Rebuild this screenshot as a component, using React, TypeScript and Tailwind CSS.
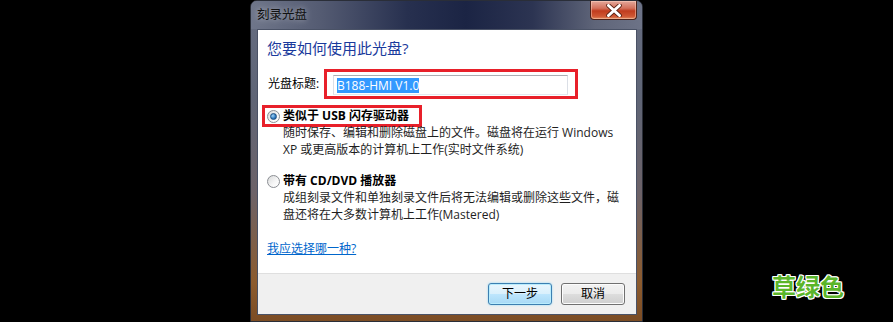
import React from "react";

function Radio({ checked = false }: { checked?: boolean }) {
  return (
    <div className="flex h-[13px] w-[13px] shrink-0 items-center justify-center rounded-full border border-[#8b8e93] bg-[linear-gradient(135deg,#d9dadb,#f7f7f7_60%,#ffffff)]">
      {checked && (
        <div className="h-[7px] w-[7px] rounded-full border border-[#1d4f82] bg-[radial-gradient(circle_at_35%_35%,#9fd3f7,#2e78bd_60%,#1a4d86)]" />
      )}
    </div>
  );
}

function CloseButton() {
  return (
    <div className="mr-[5px] flex h-[19px] w-[47px] items-center justify-center rounded-b-[4px] border border-t-0 border-[#4d2219] bg-[linear-gradient(to_bottom,#e4a89b_0%,#d3715c_40%,#c03c1e_55%,#cf5733_85%,#e08a5f_100%)] shadow-[inset_0_0_0_1px_rgba(255,220,200,0.45)]">
      <svg width="16" height="13" viewBox="0 0 16 13">
        <path d="M2.5 1.5 L13.5 11.5 M13.5 1.5 L2.5 11.5" stroke="#5a2416" strokeWidth="4.6" strokeLinecap="round" />
        <path d="M2.5 1.5 L13.5 11.5 M13.5 1.5 L2.5 11.5" stroke="#ffffff" strokeWidth="3" strokeLinecap="round" />
      </svg>
    </div>
  );
}

function BurnDialog() {
  return (
    <div className="flex h-[322px] w-[393px] flex-col overflow-hidden rounded-t-[7px] border border-[#2a2e38] bg-[linear-gradient(to_bottom,#666d81_0%,#5f6576_30%,#6c6268_60%,#8c5b2e_88%,#7b4c24_100%)]">
      {/* title bar */}
      <div className="flex h-[28px] shrink-0 items-start justify-between bg-[linear-gradient(to_right,#6f768a_0%,#545b72_18%,#27304f_40%,#1b2444_55%,#2c3452_72%,#5f6579_88%,#6d7387_100%)]">
        <div className="ml-[6px] mt-[5px] text-[12.5px] leading-[18px] text-[#111] [text-shadow:0_0_6px_rgba(255,255,255,0.55)]">
          刻录光盘
        </div>
        <CloseButton />
      </div>

      {/* client */}
      <div className="mb-[6px] ml-[6px] mr-[5px] flex flex-1 flex-col border border-[#4a5266] bg-white">
        <div className="flex flex-1 flex-col">
          <div className="ml-[9px] mt-[8px] h-[20px] text-[15px] leading-[20px] text-[#1a3a9c]">
            您要如何使用此光盘?
          </div>

          <div className="mt-[11px] flex items-center">
            <div className="ml-[10px] w-[56px] leading-[16px]">光盘标题:</div>
            <div className="w-[254px] border-[3px] border-[#e8202a] pb-[1px] pl-[6px] pr-[7px] pt-[3px]">
              <div className="flex h-[20px] w-[235px] items-center border border-[#abadb3] border-b-[#e3e9ef] border-l-[#dbdfe6] border-r-[#dbdfe6] pl-[3px]">
                <span className="bg-[#3399ff] leading-[15px] text-white">B188-HMI V1.0</span>
              </div>
            </div>
          </div>

          <div className="ml-[4px] mt-[6px] flex h-[22px] w-[160px] items-center gap-[3px] border-[3px] border-[#e8202a] pl-[2px]">
            <Radio checked />
            <span className="font-bold leading-[16px]">类似于 USB 闪存驱动器</span>
          </div>
          <div className="-mt-[3px] pl-[25px] leading-[17px] text-[#1e1e1e]">
            <div>随时保存、编辑和删除磁盘上的文件。磁盘将在运行 Windows</div>
            <div>XP 或更高版本的计算机上工作(实时文件系统)</div>
          </div>

          <div className="ml-[9px] mt-[15px] flex h-[16px] items-center gap-[3px]">
            <Radio />
            <span className="font-bold leading-[16px]">带有 CD/DVD 播放器</span>
          </div>
          <div className="pl-[25px] leading-[17px] text-[#1e1e1e]">
            <div>成组刻录文件和单独刻录文件后将无法编辑或删除这些文件，磁</div>
            <div>盘还将在大多数计算机上工作(Mastered)</div>
          </div>

          <div className="ml-[9px] mt-[18px] leading-[16px] text-[#0066cc] underline">我应选择哪一种?</div>
        </div>

        <div className="flex h-[41px] shrink-0 items-start justify-end gap-[9px] border-t border-[#dfdfdf] bg-[#f0f0f0] pr-[11px] pt-[9px]">
          <button className="flex h-[22px] w-[64px] items-center justify-center rounded-[3px] border border-[#3c7fb1] bg-[linear-gradient(to_bottom,#eaf6fd_0%,#d9f0fc_50%,#bee6fd_50%,#a7d9f5_100%)] leading-[16px] shadow-[inset_0_0_0_1px_#b9ecfd,0_0_2px_#7fd3f5]">
            下一步
          </button>
          <button className="flex h-[22px] w-[64px] items-center justify-center rounded-[3px] border border-[#707070] bg-[linear-gradient(to_bottom,#f2f2f2_0%,#ebebeb_50%,#dddddd_50%,#cfcfcf_100%)] leading-[16px] shadow-[inset_0_0_0_1px_#fcfcfc]">
            取消
          </button>
        </div>
      </div>
    </div>
  );
}

export default function App() {
  return (
    <div className="relative h-[322px] w-[893px] overflow-hidden bg-black font-['Open_Sans','Noto_Sans_CJK_SC',sans-serif] text-[12px] text-black">
      <div className="pl-[250px]">
        <BurnDialog />
      </div>
      <div className="absolute left-[772px] top-[271px] font-['Noto_Sans_CJK_SC',sans-serif] text-[24px] font-bold leading-[30px] text-[#5bb52a] [text-shadow:1px_0_0_#fff,-1px_0_0_#fff,0_1px_0_#fff,0_-1px_0_#fff,1px_1px_0_#fff,-1px_-1px_0_#fff,1px_-1px_0_#fff,-1px_1px_0_#fff]">
        草绿色
      </div>
    </div>
  );
}
